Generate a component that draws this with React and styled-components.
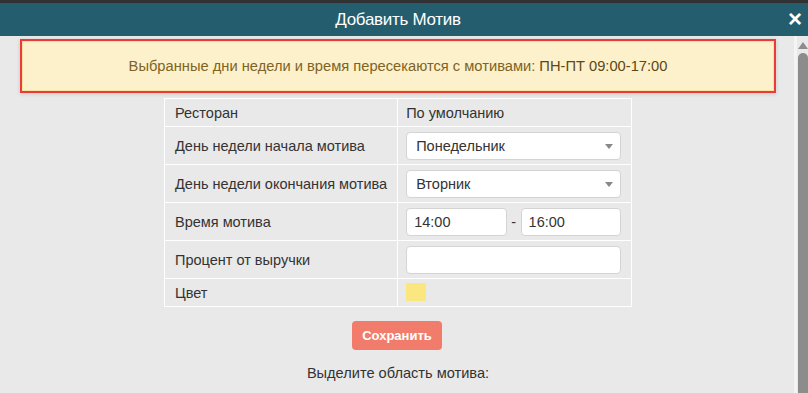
import React from "react";
import styled, { createGlobalStyle } from "styled-components";

const Global = createGlobalStyle`
  html, body {
    margin: 0;
    padding: 0;
    background: #e9e9e9;
    font-family: "Liberation Sans", Arial, sans-serif;
    color: #333;
    overflow: hidden;
  }
`;

const rows = [
  { label: "Ресторан", kind: "text", value: "По умолчанию" },
  { label: "День недели начала мотива", kind: "select", value: "Понедельник" },
  { label: "День недели окончания мотива", kind: "select", value: "Вторник" },
  { label: "Время мотива", kind: "time", from: "14:00", to: "16:00" },
  { label: "Процент от выручки", kind: "input", value: "" },
  { label: "Цвет", kind: "color", value: "#fbe77f" },
];

export default function App() {
  return (
    <>
      <Global />
      <Modal>
        <TopStrip />
        <Header>
          <Title>Добавить Мотив</Title>
          <Close>×</Close>
        </Header>
        <Body>
          <Content>
            <Alert>
              <AlertInner>
                Выбранные дни недели и время пересекаются с мотивами:{" "}
                <b>ПН-ПТ 09:00-17:00</b>
              </AlertInner>
            </Alert>
            <Table>
              <tbody>
                {rows.map((r) => (
                  <Row key={r.label} $compact={r.kind === "text" || r.kind === "color"}>
                    <LabelCell>{r.label}</LabelCell>
                    <ValueCell>
                      {r.kind === "text" && r.value}
                      {r.kind === "select" && (
                        <Select>
                          {r.value}
                          <Caret />
                        </Select>
                      )}
                      {r.kind === "time" && (
                        <TimeRow>
                          <Field>{r.from}</Field>
                          <Dash>-</Dash>
                          <Field>{r.to}</Field>
                        </TimeRow>
                      )}
                      {r.kind === "input" && <Field />}
                      {r.kind === "color" && <Swatch $color={r.value} />}
                    </ValueCell>
                  </Row>
                ))}
              </tbody>
            </Table>
            <SaveButton>Сохранить</SaveButton>
            <Hint>Выделите область мотива:</Hint>
          </Content>
          <Scrollbar>
            <ArrowUp />
            <Thumb />
          </Scrollbar>
        </Body>
      </Modal>
    </>
  );
}

const Modal = styled.div`
  width: 808px;
  height: 393px;
  display: flex;
  flex-direction: column;
`;

const TopStrip = styled.div`
  height: 3px;
  background: #2f3133;
`;

const Header = styled.div`
  position: relative;
  height: 33px;
  background: #245d6d;
  display: flex;
  align-items: center;
  justify-content: center;
`;

const Title = styled.div`
  color: #fff;
  font-family: "Liberation Sans", sans-serif;
  font-size: 17px;
  letter-spacing: -0.3px;
  padding-right: 12px;
`;

const Close = styled.span`
  position: absolute;
  right: 6px;
  top: 3px;
  color: #fff;
  font-weight: bold;
  font-size: 24px;
  line-height: 26px;
`;

const Body = styled.div`
  flex: 1;
  display: flex;
  min-height: 0;
`;

const Content = styled.div`
  flex: 1;
  padding: 3px 18px 0 20px;
  display: flex;
  flex-direction: column;
  align-items: center;
`;

const Alert = styled.div`
  align-self: stretch;
  border: 2px solid #ea3b39;
  box-shadow: 0 1px 4px rgba(0, 0, 0, 0.15);
`;

const AlertInner = styled.div`
  background: #fcf1cb;
  border: 1px solid #f6e3a6;
  height: 48px;
  display: flex;
  align-items: center;
  justify-content: center;
  font-size: 14.7px;
  color: #7f6324;
  b {
    font-weight: normal;
    color: #5f4712;
    margin-left: 4px;
  }
`;

const Table = styled.table`
  margin-top: 5px;
  width: 468px;
  border-collapse: collapse;
  font-size: 14.5px;
`;

const Row = styled.tr`
  height: ${(p) => (p.$compact ? "28px" : "38px")};
  td {
    border: 1px solid #fff;
    white-space: nowrap;
  }
`;

const LabelCell = styled.td`
  width: 212px;
  padding: 0 10px;
  color: #333;
`;

const ValueCell = styled.td`
  padding: 0 10px 0 8px;
  color: #333;
`;

const Select = styled.div`
  position: relative;
  height: 26px;
  background: #fff;
  border: 1px solid #d4d4d4;
  border-radius: 4px;
  display: flex;
  align-items: center;
  padding-left: 9px;
`;

const Caret = styled.span`
  position: absolute;
  right: 7px;
  top: 11px;
  border-left: 4px solid transparent;
  border-right: 4px solid transparent;
  border-top: 5px solid #888;
`;

const TimeRow = styled.div`
  display: flex;
  align-items: center;
`;

const Field = styled.div`
  flex: 1;
  height: 26px;
  background: #fff;
  border: 1px solid #d4d4d4;
  border-radius: 4px;
  display: flex;
  align-items: center;
  padding-left: 7px;
`;

const Dash = styled.span`
  width: 14px;
  text-align: center;
`;

const Swatch = styled.div`
  width: 20px;
  height: 18px;
  margin-top: -2px;
  background: ${(p) => p.$color};
`;

const SaveButton = styled.button`
  margin-top: 14px;
  width: 90px;
  height: 29px;
  border: none;
  border-radius: 4px;
  background: #f27c6c;
  color: #fff;
  font-family: "Liberation Sans", Arial, sans-serif;
  font-weight: bold;
  font-size: 13px;
  margin-left: -2px;
`;

const Hint = styled.div`
  margin-top: 15px;
  font-size: 14.6px;
  color: #333;
`;

const Scrollbar = styled.div`
  width: 11px;
  border-left: 3px solid #f4f4f4;
  display: flex;
  flex-direction: column;
  align-items: center;
  padding-top: 6px;
`;

const ArrowUp = styled.div`
  border-left: 5px solid transparent;
  border-right: 5px solid transparent;
  border-bottom: 7px solid #8c8c8c;
`;

const Thumb = styled.div`
  margin-top: 4px;
  width: 10px;
  flex: 1;
  background: #8c8c8c;
  border-radius: 5px 5px 0 0;
`;
